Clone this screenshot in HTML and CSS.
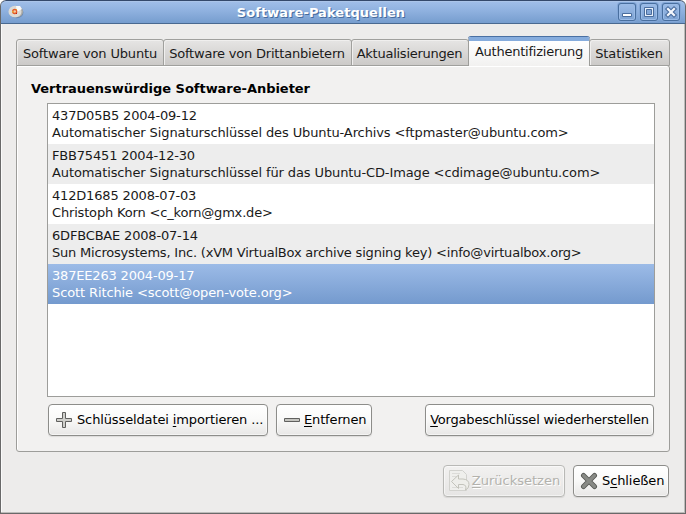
FILE: index.html
```html
<!DOCTYPE html>
<html lang="de">
<head>
<meta charset="utf-8">
<title>Software-Paketquellen</title>
<link rel="stylesheet" href="styles.css">
</head>
<body>
<div class="window">
  <header class="titlebar">
    <svg class="app-icon" width="16" height="14" viewBox="0 0 16 14">
      <ellipse cx="8.6" cy="7.4" rx="6.8" ry="5.8" fill="#5878a0" opacity=".7"/>
      <ellipse cx="9" cy="6.7" rx="6" ry="5.6" fill="#aaa9a5"/>
      <ellipse cx="7" cy="6.7" rx="6.5" ry="5.9" fill="#dddbd6"/>
      <path d="M8 1h4l2 3-5 3z" fill="#fafafa"/>
      <circle cx="6.7" cy="6.5" r="2" fill="#f4c9a0" stroke="#e55b28" stroke-width="1.3"/>
      <path d="M4 6h1.5v1.5H4zM8 4h1v1H8z" fill="#e9a52a"/>
      <path d="M8 8h1v1H8z" fill="#b82020"/>
    </svg>
    <h1 class="title">Software-Paketquellen</h1>
    <div class="controls">
      <span class="control"><svg width="18" height="18" viewBox="0 0 18 18"><path d="M4.5 10.5h9v3h-9z" fill="#fff" stroke="#4a6d9e"/></svg></span>
      <span class="control"><svg width="18" height="18" viewBox="0 0 18 18"><path d="M4.5 4.5h9v9h-9z" fill="#e8f0fa" stroke="#4a6d9e"/><path d="M6.5 6.5h5v5h-5z" fill="#83a7d8" stroke="#4a6d9e"/></svg></span>
      <span class="control"><svg width="18" height="18" viewBox="0 0 18 18"><path d="M6 6l6 6M12 6l-6 6" stroke="#4a6d9e" stroke-width="4.400" stroke-linecap="square"/><path d="M6 6l6 6M12 6l-6 6" stroke="#f4f8fd" stroke-width="2.200" stroke-linecap="square"/></svg></span>
    </div>
  </header>
  <main class="content">
    <nav class="tabs">
      <span class="tab t1">Software von Ubuntu</span>
      <span class="tab t2">Software von Drittanbietern</span>
      <span class="tab t3">Aktualisierungen</span>
      <span class="tab active t4">Authentifizierung</span>
      <span class="tab t5">Statistiken</span>
    </nav>
    <section class="panel">
      <h2 class="heading">Vertrauenswürdige Software-Anbieter</h2>
      <ul class="keys">
        <li class="key"><span class="key-id">437D05B5 2004-09-12</span><span class="owner">Automatischer Signaturschlüssel des Ubuntu-Archivs &lt;ftpmaster@ubuntu.com&gt;</span></li>
        <li class="key"><span class="key-id">FBB75451 2004-12-30</span><span class="owner">Automatischer Signaturschlüssel für das Ubuntu-CD-Image &lt;cdimage@ubuntu.com&gt;</span></li>
        <li class="key"><span class="key-id">412D1685 2008-07-03</span><span class="owner tight">Christoph Korn &lt;c_korn@gmx.de&gt;</span></li>
        <li class="key"><span class="key-id">6DFBCBAE 2008-07-14</span><span class="owner tighter">Sun Microsystems, Inc. (xVM VirtualBox archive signing key) &lt;info@virtualbox.org&gt;</span></li>
        <li class="key selected"><span class="key-id">387EE263 2004-09-17</span><span class="owner">Scott Ritchie &lt;scott@open-vote.org&gt;</span></li>
      </ul>
      <div class="actions">
        <button class="button import"><svg width="16" height="16" viewBox="0 0 16 16"><path d="M6.500.5h3v6h6v3h-6v6h-3v-6h-6v-3h6z" fill="#cfcfcb" stroke="#60605e"/></svg><span>Schlüsseldatei <u>i</u>mportieren ...</span></button>
        <button class="button remove"><svg width="16" height="16" viewBox="0 0 16 16"><path d="M.5 6.500h15v3H.5z" fill="#c4c4bf" stroke="#60605e"/></svg><span><u>E</u>ntfernen</span></button>
        <button class="button restore"><span><u>V</u>orgabeschlüssel wiederherstellen</span></button>
      </div>
    </section>
    <footer class="footer">
      <button class="button reset" disabled><svg width="22" height="22" viewBox="0 0 22 22"><path d="M1.500.5h13l4 4v16h-17z" fill="#efefec" stroke="#d2d2ce"/><path d="M4 3.500h8M4 6.500h5M4 17.500h11" stroke="#dcdcd8"/><path d="M3.500 11.500l7-6.500v4h4.500q6 .5 6 5.500 0 4-3.500 5.500 1.500-5-2.500-5.500h-4.500v4z" fill="#eeeeea" stroke="#c3c3bb"/></svg><span><u>Z</u>urücksetzen</span></button>
      <button class="button close"><svg width="18" height="18" viewBox="0 0 18 18"><path d="M3.500 3.500l11 11M14.500 3.500l-11 11" stroke="#555753" stroke-width="5" stroke-linecap="round"/><path d="M3.500 3.500l11 11M14.500 3.500l-11 11" stroke="#888a85" stroke-width="3.200" stroke-linecap="round"/></svg><span>S<u>c</u>hließen</span></button>
    </footer>
  </main>
</div>
</body>
</html>
```
FILE: styles.css
```css
* { box-sizing: border-box; }
body { margin: 0; background: #fff; font: 13px/17px "DejaVu Sans", sans-serif; color: #1a1a1a; }
.window { width: 686px; height: 514px; overflow: hidden; border: 1px solid #696969; border-top: 0; border-radius: 6px 6px 0 0; background: #edeceb; box-shadow: inset -1px -1px #bdbcba, inset 1px 0 #fafafa; }
.titlebar { display: flex; align-items: center; width: 686px; height: 24px; margin-left: -1px; padding: 0 5px 0 7px; border: 1px solid #496990; border-top-color: #34496b; border-radius: 6px 6px 0 0; background: linear-gradient(#a1bfe9, #8fb1df 45%, #769dce); box-shadow: inset 0 1px #abc5e9; }
.app-icon { flex: none; }
.title { flex: 1; margin: 0; text-align: center; font-size: 13px; line-height: 17px; letter-spacing: .05px; color: #fff; text-shadow: 1px 1px #456b9d; }
.controls { display: flex; gap: 4px; }
.control { width: 18px; height: 18px; border-radius: 3px; box-shadow: inset 0 0 0 1px #496f9f, inset 0 0 0 2px #9abbe7, 0 0 0 1px #83a7d8; }
.control svg { display: block; }
.content { padding: 13px 15px 0; }
.tabs { display: flex; align-items: flex-end; height: 29px; }
.tab { flex: none; height: 27px; padding-top: 5px; border: 1px solid #a0a09d; border-radius: 3px 3px 0 0; background: linear-gradient(#e6e5e4, #cccac8); text-align: center; white-space: nowrap; box-shadow: inset 1px 1px #f0efee; }
.tab + .tab { margin-left: -1px; }
.t1 { width: 148px; letter-spacing: -.15px; }
.t2 { width: 189px; padding-right: 1px; letter-spacing: -.2px; }
.t3 { width: 118px; padding-right: 1px; letter-spacing: -.25px; }
.t4 { width: 122px; letter-spacing: -.24px; }
.t5 { width: 81px; padding-right: 1px; letter-spacing: -.1px; }
.tab.active { position: relative; height: 29px; padding-top: 2px; border: 1px solid #9d9d9a; border-top: 4px solid #86acdd; border-bottom: 0; background: linear-gradient(#fff, #f2f1f0); box-shadow: 0 -1px #4a70a3; }
.panel { width: 654px; height: 387px; margin-top: -1px; padding: 14px 14px 0; border: 1px solid #9d9d9a; border-radius: 0 3px 3px; background: #f2f1f0; box-shadow: inset 1px 1px #fff; }
.heading { margin: 0 0 6px; font-size: 13px; line-height: 17px; letter-spacing: -.03px; color: #000; }
.keys { height: 294px; width: 608px; margin: 0 0 7px 16px; padding: 0; border: 1px solid #9d9d9a; background: #fff; list-style: none; }
.key { height: 40px; padding: 3px 4px; white-space: nowrap; }
.key:nth-child(even) { background: #ededed; }
.key.selected { background: linear-gradient(#9cbbe7, #749ace); color: #fff; }
.key-id, .owner { display: block; }
.key-id { letter-spacing: -.18px; }
.owner { letter-spacing: -.11px; }
.owner.tight { letter-spacing: -.17px; }
.owner.tighter { letter-spacing: -.2px; }
.actions { display: flex; gap: 8px; margin-left: 17px; }
.button { display: flex; align-items: center; justify-content: center; flex: none; height: 32px; margin: 0; padding: 0; border: 1px solid #8d8d8a; border-radius: 4px; background: linear-gradient(#fff, #fafaf9 45%, #e8e7e6); font: inherit; color: #000; white-space: nowrap; box-shadow: inset 0 0 0 1px #fff8, 0 1px 1px #00000018; }
.button svg { flex: none; }
.button span { padding-bottom: 1px; }
.button u { text-underline-offset: 2px; }
.import { justify-content: flex-start; width: 220px; padding-left: 7px; gap: 5px; letter-spacing: -.13px; }
.remove { justify-content: flex-start; width: 96px; padding-left: 7px; gap: 4px; letter-spacing: -.15px; }
.restore { width: 229px; margin-left: 45px; letter-spacing: -.2px; }
.footer { display: flex; justify-content: flex-end; gap: 8px; width: 654px; padding: 13px 1px 0 0; }
.reset { width: 122px; gap: 2px; border-color: #b9b9b6; background: linear-gradient(#f2f1f0, #e6e5e4); color: #b3b2ad; text-shadow: 1px 1px #fff; }
.close { justify-content: flex-start; width: 96px; padding-left: 6px; gap: 4px; letter-spacing: -.1px; }
```
